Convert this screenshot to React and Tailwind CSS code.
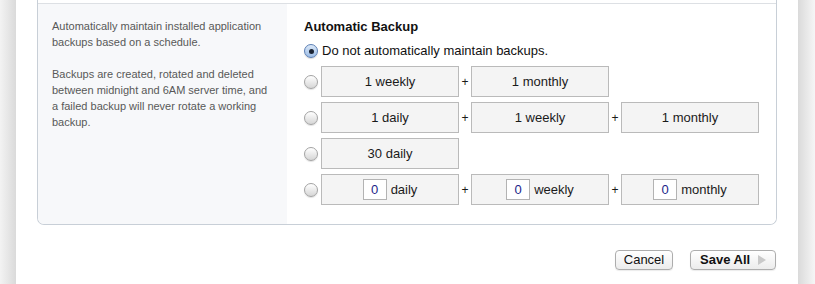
import React from "react";

const font = { fontFamily: '"Liberation Sans", Arial, Helvetica, sans-serif' };

function Radio({ checked }) {
  if (checked) {
    return (
      <div className="w-[14px] h-[14px] shrink-0 rounded-full border border-[#5b7fb4] bg-gradient-to-b from-[#dbe8f8] to-[#9dbde6] flex items-center justify-center shadow-[0_1px_1px_rgba(0,0,0,0.15)]">
        <div className="w-[5px] h-[5px] rounded-full bg-[#1b2433]" />
      </div>
    );
  }
  return (
    <div className="w-[14px] h-[14px] shrink-0 rounded-full border border-[#a3a3a3] bg-gradient-to-b from-[#ffffff] to-[#d6d6d6] shadow-[0_1px_1px_rgba(0,0,0,0.12)]" />
  );
}

function Box({ children }) {
  return (
    <div className="w-[138px] h-[31px] shrink-0 border border-[#bababa] bg-[#f4f4f4] flex items-center justify-center text-[13px] text-[#1a1a1a]">
      {children}
    </div>
  );
}

function Plus() {
  return <div className="w-[12px] shrink-0 text-center text-[12px] text-[#1a1a1a]">+</div>;
}

function NumBox({ label }) {
  return (
    <Box>
      <div className="w-[24px] h-[21px] border border-[#b3b3b3] bg-white flex items-center justify-center text-[13px] text-[#1c1f8a]">
        0
      </div>
      <span className="ml-[4px]">{label}</span>
    </Box>
  );
}

function Row({ children }) {
  return (
    <div className="flex items-center">
      <Radio />
      <div className="ml-[3px] flex items-center">{children}</div>
    </div>
  );
}

export default function App() {
  return (
    <div className="w-[815px] h-[284px] flex bg-white overflow-hidden" style={font}>
      <div className="w-[16px] h-full bg-gradient-to-r from-[#f3f3f3] to-[#dadada]" />
      <div className="flex-1 h-full bg-white px-[21px]">
        <div className="border-x border-b border-[#c8cfd7] rounded-b-[7px] overflow-hidden">
          <div className="h-[4px] border-b border-[#dde0e4] bg-white" />
          <div className="flex h-[220px]">
            <div className="w-[249px] bg-[#f7f8fa] pl-[14px] pr-[13px] pt-[14px] text-[11px] leading-[16px] text-[#585858]">
              <p>Automatically maintain installed application backups based on a schedule.</p>
              <p className="mt-[16px]">
                Backups are created, rotated and deleted between midnight and 6AM server time, and a failed backup will never rotate a working backup.
              </p>
            </div>
            <div className="flex-1 bg-white pl-[17px] pt-[15px]">
              <div className="text-[13px] leading-[16px] font-bold text-[#111]">Automatic Backup</div>
              <div className="mt-[8px] h-[16px] flex items-center">
                <Radio checked />
                <span className="ml-[4px] text-[13px] text-[#111]">Do not automatically maintain backups.</span>
              </div>
              <div className="mt-[7px] flex flex-col gap-[5px]">
                <Row>
                  <Box>1 weekly</Box>
                  <Plus />
                  <Box>1 monthly</Box>
                </Row>
                <Row>
                  <Box>1 daily</Box>
                  <Plus />
                  <Box>1 weekly</Box>
                  <Plus />
                  <Box>1 monthly</Box>
                </Row>
                <Row>
                  <Box>30 daily</Box>
                </Row>
                <Row>
                  <NumBox label="daily" />
                  <Plus />
                  <NumBox label="weekly" />
                  <Plus />
                  <NumBox label="monthly" />
                </Row>
              </div>
            </div>
          </div>
        </div>
        <div className="mt-[25px] pr-[1px] flex justify-end gap-[17px]">
          <button className="w-[58px] h-[20px] rounded-[4px] border border-[#adadad] bg-gradient-to-b from-white to-[#ececec] text-[13px] text-[#111] flex items-center justify-center shadow-[0_1px_1px_rgba(0,0,0,0.08)]">
            Cancel
          </button>
          <button className="w-[86px] h-[20px] rounded-[4px] border border-[#adadad] bg-gradient-to-b from-white to-[#ececec] text-[13px] font-bold text-[#111] flex items-center pl-[9px] shadow-[0_1px_1px_rgba(0,0,0,0.08)]">
            Save All
            <svg className="ml-[8px]" width="8" height="10" viewBox="0 0 8 10">
              <polygon points="0,0 8,5 0,10" fill="#c9c9c9" />
            </svg>
          </button>
        </div>
      </div>
      <div className="w-[17px] h-full bg-gradient-to-r from-[#dadada] to-[#f6f6f6]" />
    </div>
  );
}
